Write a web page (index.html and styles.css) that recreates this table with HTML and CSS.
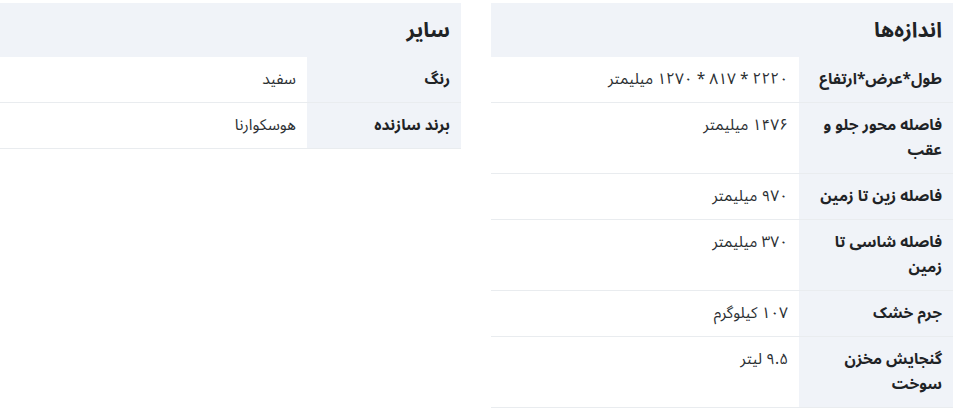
FILE: index.html
```html
<!DOCTYPE html>
<html lang="fa" dir="rtl">
<head>
<meta charset="utf-8">
<link rel="stylesheet" href="styles.css">
</head>
<body>
<div class="page">
  <section class="spec">
    <h2 class="spec-title">اندازه‌ها</h2>
    <div class="row"><div class="label">طول*عرض*ارتفاع</div><div class="value">۲۲۲۰ * ۸۱۷ * ۱۲۷۰ میلیمتر</div></div>
    <div class="row"><div class="label">فاصله محور جلو و عقب</div><div class="value">۱۴۷۶ میلیمتر</div></div>
    <div class="row"><div class="label nowrap">فاصله زین تا زمین</div><div class="value">۹۷۰ میلیمتر</div></div>
    <div class="row"><div class="label">فاصله شاسی تا زمین</div><div class="value">۳۷۰ میلیمتر</div></div>
    <div class="row"><div class="label">جرم خشک</div><div class="value">۱۰۷ کیلوگرم</div></div>
    <div class="row"><div class="label">گنجایش مخزن سوخت</div><div class="value">۹.۵ لیتر</div></div>
  </section>
  <section class="spec">
    <h2 class="spec-title">سایر</h2>
    <div class="row"><div class="label">رنگ</div><div class="value">سفید</div></div>
    <div class="row"><div class="label">برند سازنده</div><div class="value">هوسکوارنا</div></div>
  </section>
</div>
</body>
</html>
```

FILE: styles.css
```css
html, body {
  margin: 0;
  padding: 0;
  background: #ffffff;
}
body {
  font-family: "Noto Sans Arabic", "DejaVu Sans", "Noto Sans", sans-serif;
  color: #212529;
}
.page {
  display: grid;
  grid-template-columns: 462px 461px;
  column-gap: 30px;
  align-items: start;
  padding: 3px 8px 0 0;
  box-sizing: border-box;
  width: 961px;
}
.spec {
  display: flex;
  flex-direction: column;
}
.spec-title {
  margin: 0;
  height: 54px;
  display: flex;
  align-items: center;
  padding: 0 11px;
  background: #f0f3f8;
  font-size: 21px;
  font-weight: bold;
  color: #1f2326;
}
.row {
  display: grid;
  grid-template-columns: 154px 1fr;
  border-bottom: 1px solid #e9ecef;
}
.label {
  background: #f0f3f8;
  padding: 10px 11px 10px 11px;
  font-size: 15.5px;
  line-height: 25px;
  font-weight: bold;
  color: #1f2326;
}
.nowrap {
  white-space: nowrap;
}
.value {
  padding: 10px 11px;
  font-size: 15.5px;
  line-height: 25px;
  color: #2b2f33;
}
```
